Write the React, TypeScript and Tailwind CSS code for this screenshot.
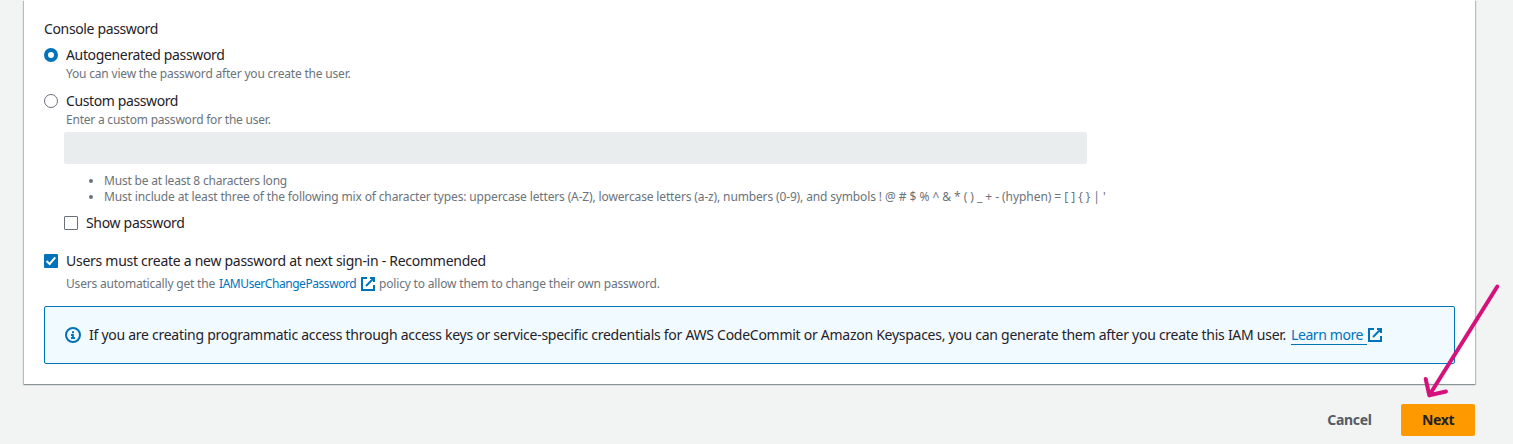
function ExternalIcon() {
  return (
    <svg viewBox="0 0 16 16" className="size-4 shrink-0" fill="none" stroke="#0073bb" strokeWidth="2">
      <path d="M10 2h4v4" />
      <path d="M6 10l8-8" />
      <path d="M14 9.05V14H2V2h5" />
    </svg>
  );
}

function InfoIcon() {
  return (
    <svg viewBox="0 0 16 16" className="size-4 shrink-0" fill="none" stroke="#0073bb" strokeWidth="2">
      <circle cx="8" cy="8" r="7" />
      <path d="M8 11V8H6M10 11H6" strokeWidth="1.8" />
      <path d="M8 6.2V4.2" />
    </svg>
  );
}

function Radio({ checked }: { checked?: boolean }) {
  return checked ? (
    <span className="size-3.5 shrink-0 rounded-full border-4 border-[#0073bb] bg-white" />
  ) : (
    <span className="size-3.5 shrink-0 rounded-full border border-[#687078] bg-white" />
  );
}

function Checkbox({ checked }: { checked?: boolean }) {
  return checked ? (
    <span className="size-3.5 shrink-0 rounded-[1px] bg-[#0073bb]">
      <svg viewBox="0 0 14 14" className="size-3.5" fill="none" stroke="white" strokeWidth="2">
        <path d="M2.5 7l3.2 3L11.2 3.4" />
      </svg>
    </span>
  ) : (
    <span className="size-3.5 shrink-0 rounded-[1px] border border-[#687078] bg-white" />
  );
}

export default function App() {
  return (
    <div className="relative h-[444px] overflow-hidden bg-[#f2f3f3] font-['Noto_Sans',sans-serif] text-sm/[22px] whitespace-nowrap text-[#1f2229]">
      <main className="mr-[38px] ml-6 flex h-[384px] flex-col bg-white pt-[18px] pr-5 pl-5 shadow-[0_1px_0_0_#879596,1px_1px_1px_0_rgba(0,28,36,0.25),-1px_1px_1px_0_rgba(0,28,36,0.25)]">
        <div className="tracking-[-0.362px]">Console password</div>

        <label className="mt-1 flex items-center gap-2">
          <Radio checked />
          <span className="tracking-[-0.35px]">Autogenerated password</span>
        </label>
        <p className="pl-[22px] text-xs/4 tracking-[-0.19px] text-[#6b737b]">
          You can view the password after you create the user.
        </p>

        <label className="mt-2 flex items-center gap-2">
          <Radio />
          <span className="tracking-[-0.39px]">Custom password</span>
        </label>
        <p className="pl-[22px] text-xs/4 tracking-[-0.22px] text-[#6b737b]">
          Enter a custom password for the user.
        </p>

        <div className="ml-5 flex flex-col">
          <input disabled aria-label="Custom password" className="mt-1 h-8 w-[1023px] rounded-xs bg-[#eaeded]" />
          <ul className="mt-[9px] list-disc pl-10 text-xs/4 text-[#6b737b]">
            <li className="tracking-[-0.203px]">Must be at least 8 characters long</li>
            <li className="tracking-[-0.142px]">
              Must include at least three of the following mix of character types: uppercase letters (A-Z), lowercase
              letters (a-z), numbers (0-9), and symbols{" "}
              <span className="tracking-[-0.055px]">{"! @ # $ % ^ & * ( ) _ + - (hyphen) = [ ] { } | '"}</span>
            </li>
          </ul>
          <label className="mt-[7px] flex items-center gap-2">
            <Checkbox />
            <span className="tracking-[-0.315px]">Show password</span>
          </label>
        </div>

        <label className="mt-4 flex items-center gap-2">
          <Checkbox checked />
          <span className="tracking-[-0.273px]">Users must create a new password at next sign-in - Recommended</span>
        </label>
        <div className="mt-1 flex h-4 items-center pl-[22px] text-xs/4 text-[#6b737b]">
          <span className="w-[153px] tracking-[-0.196px]">Users automatically get the</span>
          <a className="w-[141px] tracking-[-0.44px] text-[#0073bb]">IAMUserChangePassword</a>
          <ExternalIcon />
          <span className="ml-[3px] tracking-[-0.175px]">policy to allow them to change their own password.</span>
        </div>

        <section className="mt-3.5 flex h-[58px] items-center rounded-xs border border-[#0073bb] bg-[#f1faff] pl-5">
          <InfoIcon />
          <span className="ml-2 w-[1202px] tracking-[-0.27px]">
            If you are creating programmatic access through access keys or service-specific credentials for AWS
            CodeCommit or Amazon Keyspaces, you can generate them after you create this IAM user.
          </span>
          <a className="h-[19px] w-[76px] border-b border-[#0073bb] leading-[17px] tracking-[-0.41px] text-[#0073bb]">
            Learn more
          </a>
          <ExternalIcon />
        </section>
      </main>

      <footer className="mt-5 mr-[38px] flex items-center justify-end gap-[29px] font-bold">
        <button className="w-[45px] tracking-[-0.28px] text-[#545b64]">Cancel</button>
        <button className="h-8 w-[74px] rounded-xs bg-[#ff9900] tracking-[-0.35px]">Next</button>
      </footer>

      <svg
        viewBox="0 0 90 130"
        className="pointer-events-none absolute top-[275px] left-[1415px] h-[130px] w-[90px]"
        fill="none"
        stroke="#d5127b"
        strokeWidth="4"
        strokeLinecap="round"
        strokeLinejoin="round"
      >
        <path d="M82.3 11.5L14.3 120.3M10.7 104L14.3 120.3L31 116.5" />
      </svg>
    </div>
  );
}
